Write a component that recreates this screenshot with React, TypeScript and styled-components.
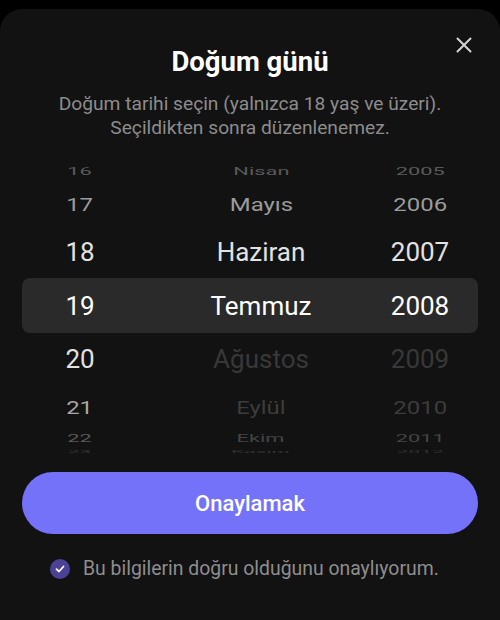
import React from "react";
import styled, { createGlobalStyle } from "styled-components";

const Global = createGlobalStyle`
  html, body { margin: 0; padding: 0; background: #000; }
  body { font-family: Roboto, "Noto Sans", "Liberation Sans", sans-serif; }
  * { box-sizing: border-box; }
`;

const Sheet = styled.div`
  position: relative;
  margin-top: 9px;
  height: 611px;
  background: #121212;
  border-radius: 22px 22px 0 0;
  padding: 36px 22px 0;
  display: flex;
  flex-direction: column;
  align-items: stretch;
`;

const CloseButton = styled.button`
  position: absolute;
  top: 24px;
  right: 24px;
  width: 24px;
  height: 24px;
  padding: 0;
  border: none;
  background: transparent;
  display: flex;
  align-items: center;
  justify-content: center;
  cursor: pointer;
`;

const Title = styled.h1`
  margin: 0;
  font-size: 27.5px;
  line-height: 34px;
  font-weight: 700;
  color: #fff;
  text-align: center;
`;

const Subtitle = styled.p`
  margin: 13px 0 0;
  font-size: 19.2px;
  line-height: 24px;
  color: #8c8c8c;
  text-align: center;
`;

const Picker = styled.div`
  margin-top: 20px;
  display: flex;
  flex-direction: column;
`;

const Row = styled.div<{ $h: number; $selected?: boolean }>`
  height: ${(p) => p.$h}px;
  display: grid;
  grid-template-columns: 116px 246px 72px;
  grid-template-rows: 100%;
  align-items: center;
  border-radius: 8px;
  background: ${(p) => (p.$selected ? "#2a2a2a" : "transparent")};
`;

const Cell = styled.div<{ $color: string; $sx: number; $sy: number }>`
  justify-self: center;
  font-size: 26px;
  line-height: 8px;
  color: ${(p) => p.$color};
  transform: scale(${(p) => p.$sx}, ${(p) => p.$sy});
  white-space: nowrap;
`;

const ConfirmButton = styled.button`
  margin-top: 16px;
  height: 62px;
  border: none;
  border-radius: 31px;
  background: #7572fa;
  color: #fff;
  font-family: inherit;
  font-size: 22px;
  font-weight: 500;
  cursor: pointer;
`;

const CheckRow = styled.label`
  margin-top: 23px;
  display: flex;
  align-items: center;
  gap: 13px;
  padding-left: 28px;
  font-size: 19.4px;
  line-height: 24px;
  color: #8e8e8e;
`;

const CheckCircle = styled.span`
  width: 20px;
  height: 20px;
  border-radius: 50%;
  background: #4b4196;
  display: flex;
  align-items: center;
  justify-content: center;
  flex-shrink: 0;
`;

type Item = { day: string; month: string; year: string; h: number; sx: number; sy: number; dc: string; mc: string; yc: string; sel?: boolean };

const rows: Item[] = [
  { day: "16", month: "Nisan", year: "2005", h: 21, sx: 0.84, sy: 0.42, dc: "#5a5a5a", mc: "#5a5a5a", yc: "#5a5a5a" },
  { day: "17", month: "Mayıs", year: "2006", h: 45, sx: 0.92, sy: 0.74, dc: "#9c9c9c", mc: "#9c9c9c", yc: "#9c9c9c" },
  { day: "18", month: "Haziran", year: "2007", h: 52, sx: 1, sy: 0.97, dc: "#e2e2e2", mc: "#e2e2e2", yc: "#e2e2e2" },
  { day: "19", month: "Temmuz", year: "2008", h: 55, sx: 1, sy: 1, dc: "#ffffff", mc: "#ffffff", yc: "#ffffff", sel: true },
  { day: "20", month: "Ağustos", year: "2009", h: 51, sx: 1, sy: 0.97, dc: "#e2e2e2", mc: "#383838", yc: "#383838" },
  { day: "21", month: "Eylül", year: "2010", h: 45, sx: 0.92, sy: 0.74, dc: "#a8a8a8", mc: "#3c3c3c", yc: "#3c3c3c" },
  { day: "22", month: "Ekim", year: "2011", h: 18, sx: 0.84, sy: 0.42, dc: "#5a5a5a", mc: "#444444", yc: "#444444" },
  { day: "23", month: "Kasım", year: "2012", h: 9, sx: 0.8, sy: 0.12, dc: "#383838", mc: "#333333", yc: "#333333" },
];

export default function App() {
  return (
    <>
      <Global />
      <Sheet>
        <CloseButton aria-label="Kapat">
          <svg width="16" height="16" viewBox="0 0 16 16" fill="none">
            <path d="M1.5 1.5L14.5 14.5M14.5 1.5L1.5 14.5" stroke="#d4d4d4" strokeWidth="2" strokeLinecap="round" />
          </svg>
        </CloseButton>
        <Title>Doğum günü</Title>
        <Subtitle>
          Doğum tarihi seçin (yalnızca 18 yaş ve üzeri).
          <br />
          Seçildikten sonra düzenlenemez.
        </Subtitle>
        <Picker>
          {rows.map((r) => (
            <Row key={r.day} $h={r.h} $selected={r.sel}>
              <Cell $color={r.dc} $sx={r.sx} $sy={r.sy}>{r.day}</Cell>
              <Cell $color={r.mc} $sx={r.sx} $sy={r.sy}>{r.month}</Cell>
              <Cell $color={r.yc} $sx={r.sx} $sy={r.sy}>{r.year}</Cell>
            </Row>
          ))}
        </Picker>
        <ConfirmButton>Onaylamak</ConfirmButton>
        <CheckRow>
          <CheckCircle>
            <svg width="12" height="12" viewBox="0 0 12 12" fill="none">
              <path d="M2.5 6.2L5 8.5L9.5 3.5" stroke="#fff" strokeWidth="1.8" strokeLinecap="round" strokeLinejoin="round" />
            </svg>
          </CheckCircle>
          Bu bilgilerin doğru olduğunu onaylıyorum.
        </CheckRow>
      </Sheet>
    </>
  );
}
